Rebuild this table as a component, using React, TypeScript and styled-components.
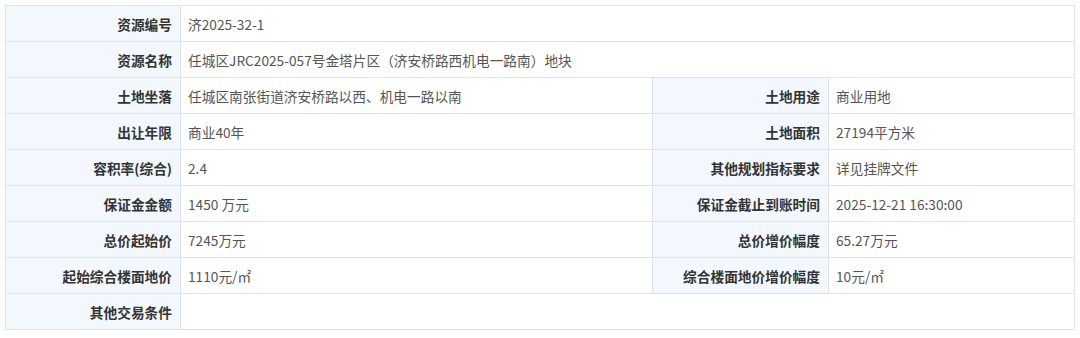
import styled, { createGlobalStyle } from "styled-components";

const GlobalStyle = createGlobalStyle`
  html, body {
    margin: 0;
    padding: 0;
    background: #ffffff;
  }
  body {
    font-family: "Microsoft YaHei", "Noto Sans CJK SC", "Noto Sans", sans-serif;
  }
`;

const Wrapper = styled.div`
  padding: 5px 6px 0 5px;
`;

const Table = styled.table`
  width: 1069px;
  border-collapse: collapse;
  table-layout: fixed;
  font-size: 13.7px;
`;

const Row = styled.tr`
  height: 36px;
`;

const Label = styled.th`
  background-color: #f2f8fd;
  color: #333333;
  font-weight: bold;
  text-align: right;
  padding: 0 8px 0 6px;
  border: 1px solid #dfe4e9;
  white-space: nowrap;
`;

const Value = styled.td`
  color: #555555;
  text-align: left;
  padding: 0 7px;
  border: 1px solid #dfe4e9;
  white-space: nowrap;
`;

type Item = { label: string; value: string };

const rows: (Item | [Item, Item])[] = [
  { label: "资源编号", value: "济2025-32-1" },
  { label: "资源名称", value: "任城区JRC2025-057号金塔片区（济安桥路西机电一路南）地块" },
  [
    { label: "土地坐落", value: "任城区南张街道济安桥路以西、机电一路以南" },
    { label: "土地用途", value: "商业用地" },
  ],
  [
    { label: "出让年限", value: "商业40年" },
    { label: "土地面积", value: "27194平方米" },
  ],
  [
    { label: "容积率(综合)", value: "2.4" },
    { label: "其他规划指标要求", value: "详见挂牌文件" },
  ],
  [
    { label: "保证金金额", value: "1450 万元" },
    { label: "保证金截止到账时间", value: "2025-12-21 16:30:00" },
  ],
  [
    { label: "总价起始价", value: "7245万元" },
    { label: "总价增价幅度", value: "65.27万元" },
  ],
  [
    { label: "起始综合楼面地价", value: "1110元/㎡" },
    { label: "综合楼面地价增价幅度", value: "10元/㎡" },
  ],
  { label: "其他交易条件", value: "" },
];

export default function App() {
  return (
    <>
      <GlobalStyle />
      <Wrapper>
        <Table>
          <colgroup>
            <col style={{ width: 175 }} />
            <col style={{ width: 472 }} />
            <col style={{ width: 176 }} />
            <col style={{ width: 246 }} />
          </colgroup>
          <tbody>
            {rows.map((r, i) =>
              Array.isArray(r) ? (
                <Row key={i}>
                  <Label>{r[0].label}</Label>
                  <Value>{r[0].value}</Value>
                  <Label>{r[1].label}</Label>
                  <Value>{r[1].value}</Value>
                </Row>
              ) : (
                <Row key={i}>
                  <Label>{r.label}</Label>
                  <Value colSpan={3}>{r.value}</Value>
                </Row>
              )
            )}
          </tbody>
        </Table>
      </Wrapper>
    </>
  );
}
